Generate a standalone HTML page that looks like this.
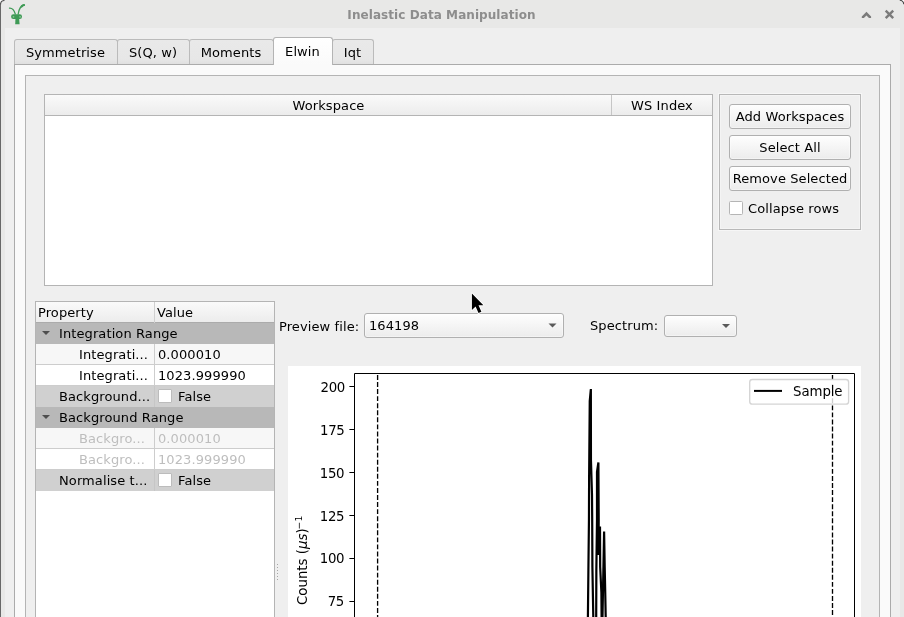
<!DOCTYPE html>
<html>
<head>
<meta charset="utf-8">
<title>Inelastic Data Manipulation</title>
<style>
*{box-sizing:border-box;margin:0;padding:0}
html,body{width:904px;height:617px;overflow:hidden;background:#efefef}
body{position:relative;font-family:"DejaVu Sans","Liberation Sans",sans-serif;font-size:13px;color:#000;line-height:15px;letter-spacing:0.1px}
#root{position:absolute;left:0;top:0;width:904px;height:617px;overflow:hidden;will-change:transform}
.a{position:absolute}
.t{position:absolute;white-space:nowrap;line-height:15px;height:15px}
/* window frame */
#titlebar{left:0;top:0;width:904px;height:28px;background:#e8e8e7}
#fl{left:0;top:0;width:5px;height:617px;background:#e8e8e7}
#fr{left:900px;top:0;width:4px;height:617px;background:#e8e8e7}
#dl{left:0;top:3px;width:1px;height:614px;background:#686868}
#title{left:0;width:883px;top:8px;text-align:center;font-weight:bold;font-size:12px;color:#8d8d8d;letter-spacing:0.07px}
/* tabs */
.tab{position:absolute;top:39px;height:25px;padding-right:1px;border:1px solid #bbb;border-bottom:none;border-radius:3px 3px 0 0;background:linear-gradient(#e9e9e9 0,#e7e7e7 80%,#e0e0e0 100%);text-align:center;line-height:15px;padding-top:5px;margin-left:0}
.tab.sel{top:37px;height:28px;background:linear-gradient(#fff,#fafafa);z-index:3;padding-top:6px;border-color:#b4b4b4}
#pane{left:14px;top:64px;width:877px;height:570px;border:1px solid #ababab;background:#fafafa}
#inner{left:25px;top:75px;width:855px;height:560px;border:1px solid #b4b4b4;background:#efefef}
/* table */
#table{left:44px;top:94px;width:669px;height:192px;border:1px solid #b4b4b4;background:#fff}
.hdr{position:absolute;top:0;height:21px;background:linear-gradient(#fafafa,#ececec);border-bottom:1px solid #b4b4b4;text-align:center;line-height:15px;padding-top:3px}
/* group */
#grp{left:719px;top:94px;width:142px;height:136px;border:1px solid #b8b8b8;box-shadow:0 0 0 1px rgba(255,255,255,.45), inset 0 0 0 1px rgba(255,255,255,.35)}
.btn{position:absolute;left:729px;width:122px;height:25px;border:1px solid #b0b0b0;border-radius:3px;background:linear-gradient(#fefefe,#ececec);text-align:center;line-height:15px;padding-top:4px;box-shadow:inset 0 0 0 1px rgba(255,255,255,.4)}
.cb{position:absolute;width:14px;height:14px;border:1px solid #b5b5b5;border-radius:1.5px;background:#fff}
/* property panel */
#prop{left:35px;top:301px;width:240px;height:340px;border:1px solid #b4b4b4;background:#fff}
.row{position:absolute;left:0;width:238px;height:21px}
.row .c1,.row .c2{position:absolute;top:0;height:21px;line-height:15px;padding-top:3px;white-space:nowrap;overflow:hidden}
.combo{position:absolute;border:1px solid #b0b0b0;border-radius:3px;background:linear-gradient(#fefefe,#ececec);box-shadow:inset 0 0 0 1px rgba(255,255,255,.4)}
.arr{position:absolute;width:0;height:0;border-left:4px solid transparent;border-right:4px solid transparent;border-top:4px solid #5a5a5a}
</style>
</head>
<body>
<div id="root">
<!-- window chrome -->
<div class="a" id="titlebar"></div>
<div class="a" id="fl"></div>
<div class="a" id="fr"></div>
<div class="a" id="dl"></div>
<svg class="a" style="left:0;top:0" width="904" height="28" viewBox="0 0 904 28">
  <!-- corners -->
  <path d="M0 0H4L0 4Z" fill="#fff"/>
  <path d="M0.5 4.5Q0.5 0.5 4.5 0.5" stroke="#555" stroke-width="1.2" fill="none"/>
  <path d="M904 0H900L904 4Z" fill="#fff"/>
  <path d="M899.8 0.2Q903.4 0.6 903.8 4.2" stroke="#444" stroke-width="1.1" fill="none"/>
  <!-- mantid icon -->
  <g fill="none" stroke="#3f9a56" stroke-linecap="round">
    <path d="M9.5 8.1C11.8 7.9 14 9.9 15.3 14" stroke-width="1.25"/>
    <path d="M24 5C21.1 5.8 18.9 9.1 18.2 14" stroke-width="1.3"/>
    <path d="M24.1 5.1C23.2 5.2 22.3 5.7 21.6 6.5" stroke-width="2"/>
  </g>
  <rect x="11.1" y="14.3" width="10.9" height="4.7" rx="2.3" fill="#3f9a56"/>
  <path d="M15.5 17.5H19L19.6 24.3H15.2Z" fill="#3f9a56"/>
  <ellipse cx="13.5" cy="16.8" rx="0.9" ry="0.9" fill="#86c494"/>
  <ellipse cx="20.1" cy="16.8" rx="0.9" ry="0.9" fill="#86c494"/>
  <!-- min / close -->
  <path d="M866.45 11.7L871.1 16.4V18.1H869L866.45 15.4L863.9 18.1H861.8V16.4Z" fill="#7b7b7b"/>
  <path d="M885.7 10.7L893.2 18.2M893.2 10.7L885.7 18.2" stroke="#7b7b7b" stroke-width="2.4" fill="none"/>
</svg>
<div class="t" id="title">Inelastic Data Manipulation</div>

<!-- tab pane -->
<div class="a" id="pane"></div>
<div class="tab" style="left:14px;width:104px">Symmetrise</div>
<div class="tab" style="left:117px;width:73px">S(Q, w)</div>
<div class="tab" style="left:189px;width:85px">Moments</div>
<div class="tab sel" style="left:273px;width:60px">Elwin</div>
<div class="tab" style="left:332px;width:42px">Iqt</div>

<div class="a" id="inner"></div>

<!-- workspace table -->
<div class="a" id="table">
  <div class="hdr" style="left:0;width:567px">Workspace</div><div class="a" style="left:566px;top:0;width:1px;height:20px;background:#c6c6c6;z-index:2"></div>
  <div class="hdr" style="left:567px;width:100px">WS Index</div>
</div>

<!-- button group -->
<div class="a" id="grp"></div>
<div class="btn" style="top:104px">Add Workspaces</div>
<div class="btn" style="top:135px">Select All</div>
<div class="btn" style="top:166px">Remove Selected</div>
<div class="cb" style="left:729px;top:201px"></div>
<div class="t" style="left:748px;top:201px">Collapse rows</div>

<!-- property browser -->
<div class="a" id="prop">
  <div class="row" style="top:0;background:linear-gradient(#fafafa,#ececec);border-bottom:1px solid #ababab">
    <div class="c1" style="left:2px;width:117px;border-right:1px solid #d0d0d0">Property</div>
    <div class="c2" style="left:121px">Value</div>
  </div>
  <div class="row" style="top:21px;background:#b8b8b8">
    <div class="arr" style="left:6px;top:8px;border-top-color:#4e4e4e"></div>
    <div class="c1" style="left:23px">Integration Range</div>
  </div>
  <div class="row" style="top:42px;background:#f7f7f7;border-bottom:1px solid #cdcdcd">
    <div class="c1" style="left:43px;width:75px">Integrati...</div>
    <div class="c2" style="left:118px;width:120px;border-left:1px solid #cdcdcd;padding-left:3px">0.000010</div>
  </div>
  <div class="row" style="top:63px;background:#fff;border-bottom:1px solid #cdcdcd">
    <div class="c1" style="left:43px;width:75px">Integrati...</div>
    <div class="c2" style="left:118px;width:120px;border-left:1px solid #cdcdcd;padding-left:3px">1023.999990</div>
  </div>
  <div class="row" style="top:84px;background:#d0d0d0">
    <div class="c1" style="left:23px;width:95px">Background...</div>
    <div class="c2" style="left:118px;width:120px;border-left:1px solid #c6c6c6"></div>
    <div class="cb" style="left:122px;top:3px;width:14px;height:14px;border-radius:1px;border-color:#bcbcbc"></div>
    <div class="c2" style="left:142px">False</div>
  </div>
  <div class="row" style="top:105px;background:#b8b8b8">
    <div class="arr" style="left:6px;top:8px;border-top-color:#4e4e4e"></div>
    <div class="c1" style="left:23px">Background Range</div>
  </div>
  <div class="row" style="top:126px;background:#f7f7f7;border-bottom:1px solid #cdcdcd;color:#bebebe">
    <div class="c1" style="left:43px;width:75px">Backgro...</div>
    <div class="c2" style="left:118px;width:120px;border-left:1px solid #cdcdcd;padding-left:3px">0.000010</div>
  </div>
  <div class="row" style="top:147px;background:#fff;border-bottom:1px solid #cdcdcd;color:#bebebe">
    <div class="c1" style="left:43px;width:75px">Backgro...</div>
    <div class="c2" style="left:118px;width:120px;border-left:1px solid #cdcdcd;padding-left:3px">1023.999990</div>
  </div>
  <div class="row" style="top:168px;background:#d0d0d0">
    <div class="c1" style="left:23px;width:95px">Normalise t...</div>
    <div class="c2" style="left:118px;width:120px;border-left:1px solid #c6c6c6"></div>
    <div class="cb" style="left:122px;top:3px;width:14px;height:14px;border-radius:1px;border-color:#bcbcbc"></div>
    <div class="c2" style="left:142px">False</div>
  </div>
</div>

<!-- splitter dots -->
<svg class="a" style="left:275px;top:560px" width="6" height="24" viewBox="0 0 6 24">
  <g fill="#a6a6a6"><rect x="2" y="4" width="1" height="1"/><rect x="2" y="7" width="1" height="1"/><rect x="2" y="10" width="1" height="1"/><rect x="2" y="13" width="1" height="1"/><rect x="2" y="16" width="1" height="1"/><rect x="2" y="19" width="1" height="1"/></g>
</svg>

<!-- preview controls -->
<div class="t" style="left:279px;top:319px">Preview file:</div>
<div class="combo" style="left:364px;top:313px;width:200px;height:25px"></div>
<div class="t" style="left:369px;top:318px">164198</div>
<div class="arr" style="left:548px;top:324px;transform:translate(0.5px,-0.6px)"></div>
<div class="t" style="left:590px;top:318px">Spectrum:</div>
<div class="combo" style="left:664px;top:315px;width:73px;height:22px"></div>
<div class="arr" style="left:722px;top:324px"></div>

<!-- plot -->
<svg class="a" style="left:288px;top:366px" width="573" height="251" viewBox="288 366 573 251" font-family="DejaVu Sans, Liberation Sans, sans-serif" font-size="13.33px" letter-spacing="0">
  <rect x="288" y="366" width="573" height="251" fill="#fff"/>
  <!-- data -->
  <g fill="none" stroke="#000" stroke-width="2.2" stroke-linejoin="bevel">
    <polyline points="587.7,640 587.9,617 588.4,570 588.95,520 589.1,479 589.3,455 589.75,401 590.85,389 590.95,460 592,495 592.2,520 592.4,567 593.3,617 593.8,640"/>
    <polyline points="596.2,640 596.2,617 596.35,570 597,520 597,472 598.4,462.5 598.7,520 598.5,555 600,526.5 600.2,567 601.4,593 601.6,617 601.8,640"/>
    <polyline points="602.1,640 602.5,617 604.1,531.4 604.7,567 605.25,593 605.7,617 606.1,640"/>
  </g>
  <!-- range lines -->
  <path d="M377.6 375V618" stroke="#000" stroke-width="1.33" stroke-dasharray="4.93 2.13" fill="none"/>
  <path d="M832.5 375V379.5" stroke="#000" stroke-width="1.33" fill="none"/>
  <path d="M832.5 384.2V618" stroke="#000" stroke-width="1.33" stroke-dasharray="4.93 2.13" fill="none"/>
  <!-- axes -->
  <path d="M354.5 618V373.5H854.5V618" stroke="#000" stroke-width="1" fill="none"/>
  <g stroke="#000" stroke-width="1">
    <path d="M349.4 386.5H354.5M349.4 429.5H354.5M349.4 472.5H354.5M349.4 515.5H354.5M349.4 558.5H354.5M349.4 601.5H354.5"/>
  </g>
  <g text-anchor="end" fill="#000" transform="translate(-1 0.5)" letter-spacing="-0.35">
    <text x="346" y="391.5">200</text>
    <text x="345.5" y="434.5">175</text>
    <text x="345.2" y="477.5">150</text>
    <text x="345.2" y="520.4">125</text>
    <text x="345.2" y="562.8">100</text>
    <text x="344.9" y="605.6">75</text>
  </g>
  <text transform="translate(307 605) rotate(-90)" fill="#000">Counts (<tspan font-style="italic">μs</tspan>)<tspan dy="-5" dx="-1" font-size="9.33px">−1</tspan></text>
  <!-- legend -->
  <rect x="749.7" y="379.5" width="98.9" height="24.6" rx="2.7" fill="#fff" fill-opacity="0.8" stroke="#ccc" stroke-opacity="0.85" stroke-width="1.33"/>
  <path d="M754 390.9H782" stroke="#000" stroke-width="2"/>
  <text x="793.1" y="395.9" letter-spacing="-0.1">Sample</text>
</svg>

<!-- cursor -->
<svg class="a" style="left:468px;top:290px" width="20" height="28" viewBox="467.6 290 20 28">
  <path d="M471.5 293.4V309.9L475.2 306.5L478.1 313L481 311.7L478.1 305.3H483Z" fill="#000" stroke="#fff" stroke-width="1.8" stroke-linejoin="round" paint-order="stroke"/>
</svg>
</div>
</body>
</html>
